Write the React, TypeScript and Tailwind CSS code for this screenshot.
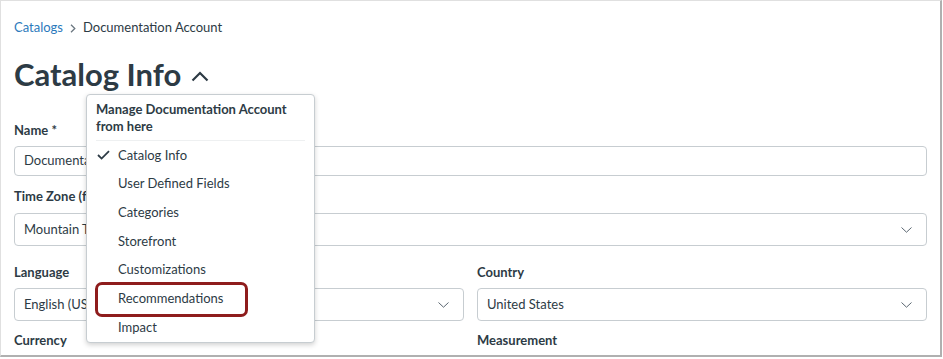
import React from "react";

const font = { fontFamily: "Lato, 'Noto Sans', sans-serif" };

function SelectChevron() {
  return (
    <svg width="11" height="6" viewBox="0 0 11 6" className="shrink-0">
      <path d="M0.5 0.5 L5.5 5.2 L10.5 0.5" fill="none" stroke="#5a6670" strokeWidth="1" />
    </svg>
  );
}

function Label({ children, className = "" }: { children: React.ReactNode; className?: string }) {
  return (
    <div className={`text-[13px] leading-[18px] font-bold text-[#2d3b45] ${className}`}>{children}</div>
  );
}

function Select({ value }: { value: string }) {
  return (
    <div className="h-[33px] border border-[#c7cdd1] rounded-[4px] flex items-center justify-between pl-[9px] pr-[14px] text-[13px] text-[#2d3b45]">
      <span>{value}</span>
      <SelectChevron />
    </div>
  );
}

const items = [
  "Catalog Info",
  "User Defined Fields",
  "Categories",
  "Storefront",
  "Customizations",
  "Recommendations",
  "Impact",
];

export default function App() {
  return (
    <div className="w-[943px] h-[359px] bg-white overflow-hidden" style={font}>
      <div className="relative w-[942px] h-[357px] border-l border-t border-r-2 border-b-2 border-[#e0e0e0] border-r-[#b0b0b0] border-b-[#b0b0b0] overflow-hidden pl-[13px] pr-[13px] pt-[18px]">
        {/* Breadcrumb */}
        <div className="flex items-center h-[18px] text-[13px] text-[#2d3b45]">
          <span className="text-[#2b7abc]">Catalogs</span>
          <svg width="6" height="9" viewBox="0 0 6 9" className="ml-[7px] mr-[7px]">
            <path d="M1 0.8 L4.8 4.5 L1 8.2" fill="none" stroke="#6b7780" strokeWidth="1.3" />
          </svg>
          <span>Documentation Account</span>
        </div>

        {/* Heading */}
        <div className="mt-[17px] flex items-center h-[40px]">
          <h1 className="text-[31px] leading-[40px] font-bold text-[#2d3b45]">Catalog Info</h1>
          <svg width="18" height="11" viewBox="0 0 18 11" className="ml-[10px] mt-[4px]">
            <path d="M1.5 9.5 L9 2 L16.5 9.5" fill="none" stroke="#2d3b45" strokeWidth="2.2" />
          </svg>
        </div>

        {/* Name */}
        <Label className="mt-[27px]">Name *</Label>
        <div className="mt-[7px] h-[30px] border border-[#c7cdd1] rounded-[4px] flex items-center px-[9px] text-[13px] text-[#2d3b45]">
          Documentation Account
        </div>

        {/* Time zone */}
        <Label className="mt-[11px]">Time Zone (for Catalog Display)</Label>
        <div className="mt-[8px]">
          <Select value="Mountain Time (US & Canada)" />
        </div>

        {/* Language / Country */}
        <div className="mt-[17px] grid grid-cols-2 gap-x-[13px]">
          <div>
            <Label>Language</Label>
            <div className="mt-[7px]">
              <Select value="English (US)" />
            </div>
            <Label className="mt-[10px]">Currency</Label>
          </div>
          <div>
            <Label>Country</Label>
            <div className="mt-[7px]">
              <Select value="United States" />
            </div>
            <Label className="mt-[10px]">Measurement</Label>
          </div>
        </div>

        {/* Dropdown menu */}
        <div className="absolute left-[85px] top-[93px] w-[229px] h-[249px] bg-white border border-[#c7cdd1] rounded-[4px] shadow-[0_2px_5px_rgba(0,0,0,0.18)]">
          <div className="mx-[9px] pt-[6px] pb-[5px] text-[13px] leading-[17px] font-bold text-[#2d3b45] border-b border-[#eef0f1]">
            Manage Documentation Account
            <br />
            from here
          </div>
          <div className="flex flex-col">
            {items.map((it, i) => (
              <div key={it} className="h-[28.7px] flex items-center text-[13px] text-[#2d3b45]">
                <div className="w-[31px] pl-[10px] flex items-center">
                  {i === 0 && (
                    <svg width="13" height="10" viewBox="0 0 13 10">
                      <path d="M1 5 L4.6 8.6 L12 1.2" fill="none" stroke="#2d3b45" strokeWidth="1.8" />
                    </svg>
                  )}
                </div>
                <span>{it}</span>
              </div>
            ))}
          </div>
          <div className="absolute left-[8px] top-[187px] w-[153px] h-[35px] border-[3px] border-[#8e1c1c] rounded-[7px]" />
        </div>
      </div>
    </div>
  );
}
